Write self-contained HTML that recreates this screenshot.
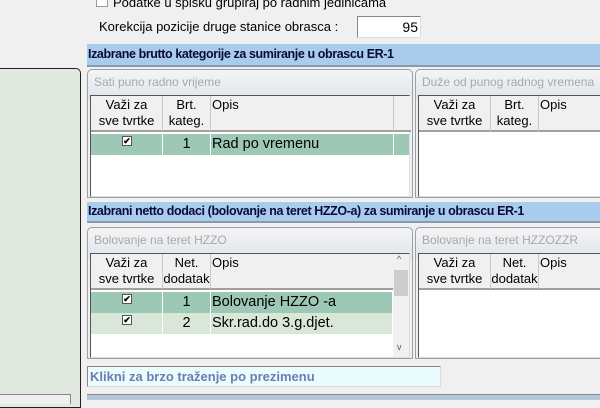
<!DOCTYPE html><html><head><style>
*{margin:0;padding:0;box-sizing:border-box}
body{width:600px;height:400px;overflow:hidden;background:#f0f0f0;font-family:"Liberation Sans",Arial,sans-serif;position:relative;font-size:12px;color:#000}
.a{position:absolute}
.bar{position:absolute;left:87px;width:513px;background:#a9cbec;border-bottom:2px solid #8a9aa8;font-weight:bold;color:#0a0a3a;font-size:12.5px;padding-left:1px;letter-spacing:-0.4px}
.panel{position:absolute;border:1px solid #9aa0a8;border-radius:5px 5px 0 0;background:linear-gradient(#f4f4f4,#dfe6ee 30px,#f0f0f0 31px)}
.ptitle{position:absolute;left:6px;top:5px;color:#a8a8a8;font-size:12px}
.grid{position:absolute;background:#fff;border:1px solid #555;border-right-color:#ddd;border-bottom-color:#ddd}
.hd{position:absolute;top:0;height:36px;background:#f0f0f0;border-right:1px solid #c8c8c8;border-bottom:2px solid #a0a0a0;text-align:center;line-height:16px;padding-top:1px;font-size:13px}
.row{position:absolute;height:21px;font-size:14.5px;line-height:21px}
.cell{position:absolute;top:0;height:21px;border-right:1px solid #fff}
.cb{position:absolute;width:10px;height:10px;background:#fff;border:1px solid #555;font-size:9px;line-height:8px;text-align:center;font-weight:bold}
</style></head><body>
<div class="a" style="left:0;top:68px;width:81px;height:340px;background:#e1e9e1;border:1px solid #222;border-left:none;border-radius:0 5px 0 0"></div>
<div class="a" style="left:0;top:394px;width:71px;height:10px;border-top:1px solid #888;border-right:1px solid #888;background:#f0f0f0"></div>
<div class="a" style="left:96px;top:-5px;width:12px;height:12px;border:1px solid #999;background:#fff"></div>
<div class="a" style="left:113px;top:-5px;font-size:13px">Podatke u spisku grupiraj po radnim jedinicama</div>
<div class="a" style="left:99px;top:19px;font-size:13px">Korekcija pozicije druge stanice obrasca :</div>
<div class="a" style="left:357px;top:16px;width:64px;height:22px;background:#fff;border:1px solid #888;border-right-color:#ddd;border-bottom-color:#ddd;text-align:right;font-size:14px;line-height:20px;padding-right:2px">95</div>

<div class="bar" style="top:44px;height:23px;line-height:20px">Izabrane brutto kategorije za sumiranje u obrascu ER-1</div>
<div class="panel" style="left:87px;top:69px;width:326px;height:129px"><div class="ptitle">Sati puno radno vrijeme</div>
<div class="grid" style="left:2px;top:25px;width:320px;height:102px">
<div class="hd" style="left:0;width:72px">Važi za<br>sve tvrtke</div>
<div class="hd" style="left:72px;width:48px">Brt.<br>kateg.</div>
<div class="hd" style="left:120px;width:183px;text-align:left;padding-left:1px">Opis</div>
<div class="hd" style="left:303px;width:17px;border-right:none"></div>
<div class="row" style="left:0;top:38px;width:318px;background:#9ec8b6">
<div class="cell" style="left:0;width:72px"><div class="cb" style="left:31px;top:2px">✔</div></div>
<div class="cell" style="left:72px;width:48px;text-align:center">1</div>
<div class="cell" style="left:120px;width:183px;padding-left:1px">Rad po vremenu</div></div>
</div></div>
<div class="panel" style="left:415px;top:69px;width:190px;height:129px"><div class="ptitle">Duže od punog radnog vremena</div>
<div class="grid" style="left:2px;top:25px;width:190px;height:102px">
<div class="hd" style="left:0;width:72px">Važi za<br>sve tvrtke</div>
<div class="hd" style="left:72px;width:48px">Brt.<br>kateg.</div>
<div class="hd" style="left:120px;width:70px;text-align:left;padding-left:1px;border-right:none">Opis</div>
</div></div>

<div class="bar" style="top:202px;height:21px;line-height:19px">Izabrani netto dodaci (bolovanje na teret HZZO-a) za sumiranje u obrascu ER-1</div>
<div class="panel" style="left:87px;top:227px;width:326px;height:132px"><div class="ptitle">Bolovanje na teret HZZO</div>
<div class="grid" style="left:2px;top:25px;width:320px;height:105px">
<div class="hd" style="left:0;width:72px">Važi za<br>sve tvrtke</div>
<div class="hd" style="left:72px;width:48px">Net.<br>dodatak</div>
<div class="hd" style="left:120px;width:183px;text-align:left;padding-left:1px">Opis</div>
<div class="a" style="left:302px;top:0;width:16px;height:103px;background:#f0f0f0"><div class="a" style="left:1px;top:16px;width:14px;height:26px;background:#cdcdcd"></div><div class="a" style="left:4px;top:0;font-size:9px;color:#555">^</div><div class="a" style="left:4px;top:88px;font-size:9px;color:#555">v</div></div>
<div class="row" style="left:0;top:38px;width:302px;background:#9ec8b6">
<div class="cell" style="left:0;width:72px"><div class="cb" style="left:31px;top:2px">✔</div></div>
<div class="cell" style="left:72px;width:48px;text-align:center">1</div>
<div class="cell" style="left:120px;width:182px;padding-left:1px">Bolovanje HZZO -a</div></div>
<div class="row" style="left:0;top:59px;width:302px;background:#d9e7d9">
<div class="cell" style="left:0;width:72px"><div class="cb" style="left:31px;top:2px">✔</div></div>
<div class="cell" style="left:72px;width:48px;text-align:center">2</div>
<div class="cell" style="left:120px;width:182px;padding-left:1px">Skr.rad.do 3.g.djet.</div></div>
</div></div>
<div class="panel" style="left:415px;top:227px;width:190px;height:132px"><div class="ptitle">Bolovanje na teret HZZOZZR</div>
<div class="grid" style="left:2px;top:25px;width:190px;height:105px">
<div class="hd" style="left:0;width:72px">Važi za<br>sve tvrtke</div>
<div class="hd" style="left:72px;width:48px">Net.<br>dodatak</div>
<div class="hd" style="left:120px;width:70px;text-align:left;padding-left:1px;border-right:none">Opis</div>
</div></div>

<div class="a" style="left:87px;top:366px;width:354px;height:21px;background:#eafcfc;border:1px solid #888;border-right-color:#ddd;border-bottom-color:#ddd;color:#6f7bb5;font-weight:bold;font-size:13px;line-height:19px;padding-left:2px">Klikni za brzo traženje po prezimenu</div>
<div class="a" style="left:87px;top:394px;width:513px;height:6px;background:#b6c9dc;border-top:1px solid #888"></div>
</body></html>
